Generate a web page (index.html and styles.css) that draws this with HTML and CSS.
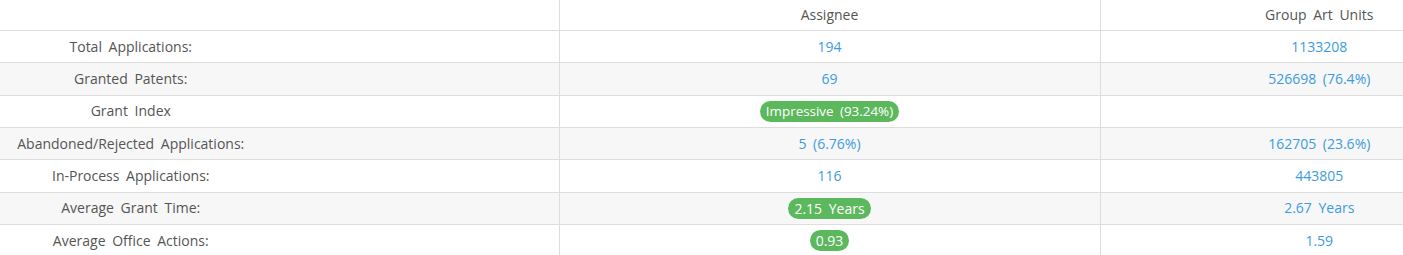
FILE: index.html
```html
<!DOCTYPE html>
<html>
<head>
<meta charset="utf-8">
<link rel="stylesheet" href="styles.css">
</head>
<body>
<div class="wrap">
<table class="stats">
  <thead>
    <tr>
      <th class="label"></th>
      <th class="mid">Assignee</th>
      <th class="right">Group Art Units</th>
    </tr>
  </thead>
  <tbody>
    <tr>
      <td class="label">Total Applications:</td>
      <td class="mid link">194</td>
      <td class="right link">1133208</td>
    </tr>
    <tr class="alt">
      <td class="label">Granted Patents:</td>
      <td class="mid link">69</td>
      <td class="right link">526698 (76.4%)</td>
    </tr>
    <tr>
      <td class="label">Grant Index</td>
      <td class="mid"><span class="pill pill-sm">Impressive (93.24%)</span></td>
      <td class="right"></td>
    </tr>
    <tr class="alt">
      <td class="label">Abandoned/Rejected Applications:</td>
      <td class="mid link">5 (6.76%)</td>
      <td class="right link">162705 (23.6%)</td>
    </tr>
    <tr>
      <td class="label">In-Process Applications:</td>
      <td class="mid link">116</td>
      <td class="right link">443805</td>
    </tr>
    <tr class="alt">
      <td class="label">Average Grant Time:</td>
      <td class="mid"><span class="pill">2.15 Years</span></td>
      <td class="right link">2.67 Years</td>
    </tr>
    <tr>
      <td class="label">Average Office Actions:</td>
      <td class="mid"><span class="pill">0.93</span></td>
      <td class="right link">1.59</td>
    </tr>
  </tbody>
</table>
</div>
</body>
</html>
```
FILE: styles.css
```css
html, body {
  margin: 0;
  padding: 0;
  background: #fff;
}
.wrap {
  width: 1403px;
  overflow: hidden;
}
.stats {
  width: 1538px;
  border-collapse: collapse;
  table-layout: fixed;
  font-family: "Open Sans", "Liberation Sans", sans-serif;
  font-size: 14px;
  color: #555;
  word-spacing: 3px;
}
.stats th,
.stats td {
  box-sizing: border-box;
  text-align: center;
  vertical-align: middle;
  font-weight: normal;
  line-height: 18px;
  padding: 0;
  height: 32.33px;
  border-bottom: 1px solid #ddd;
}
.stats thead th {
  height: 30.5px;
}
.stats .label {
  width: 559px;
  padding-right: 297px;
}
.stats .mid {
  width: 541px;
  border-left: 1px solid #ddd;
  border-right: 1px solid #ddd;
}
.stats .right {
  width: 438px;
}
.stats tr.alt td {
  background: #f7f7f7;
}
.stats tbody tr:last-child td {
  border-bottom: none;
}
.link {
  color: #3d9be0;
}
.pill {
  display: inline-block;
  background: #5cb85c;
  color: #fff;
  border-radius: 11px;
  padding: 1px 6px 1px 6px;
  line-height: 19px;
  font-size: 14px;
  vertical-align: middle;
}
.pill-sm {
  font-size: 13.4px;
}
```
